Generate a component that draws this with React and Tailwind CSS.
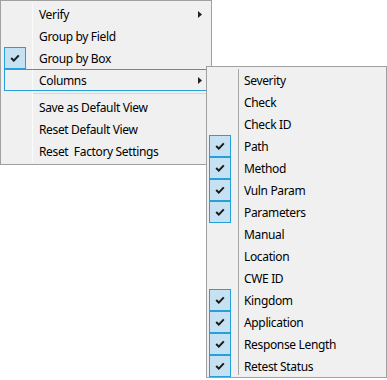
import React from "react";

function Check() {
  return (
    <svg width="10" height="8" viewBox="0 0 10 8" className="block">
      <path d="M1.2 4 L3.8 6.6 L8.8 1.4" fill="none" stroke="#1a1a1a" strokeWidth="2" />
    </svg>
  );
}

function Arrow() {
  return (
    <svg width="4" height="7" viewBox="0 0 4 7" className="block">
      <path d="M0 0 L4 3.5 L0 7 Z" fill="#222" />
    </svg>
  );
}

function Row({ label, checked, arrow, active }) {
  return (
    <div
      className={
        "relative flex h-[22px] items-center " +
        (active ? "outline outline-1 -outline-offset-1 outline-[#26a0da]" : "")
      }
    >
      <div className="w-[22px] h-[22px] shrink-0">
        {checked && (
          <div className="w-[22px] h-[22px] border border-[#26a0da] bg-[#c6e2f2] flex items-center justify-center">
            <Check />
          </div>
        )}
      </div>
      <div className="pl-[13px] pt-[2px] flex-1 text-[#000] leading-[20px] tracking-[-0.35px] whitespace-pre">{label}</div>
      {arrow && (
        <div className="pr-[5px]">
          <Arrow />
        </div>
      )}
    </div>
  );
}

export default function App() {
  const sub = [
    ["Severity", false],
    ["Check", false],
    ["Check ID", false],
    ["Path", true],
    ["Method", true],
    ["Vuln Param", true],
    ["Parameters", true],
    ["Manual", false],
    ["Location", false],
    ["CWE ID", false],
    ["Kingdom", true],
    ["Application", true],
    ["Response Length", true],
    ["Retest Status", true],
  ];
  return (
    <div className="relative w-[387px] h-[380px] bg-white font-['Noto_Sans',sans-serif] text-[12px] overflow-hidden">
      <div className="relative w-[212px] h-[165px] border border-[#a0a0a0] bg-[#f0f0f0] pt-[2px] pl-[3px] pr-[4px]">
        <div className="absolute left-[31px] top-[2px] bottom-[2px] w-px bg-[#fbfbfb]" />
        <Row label="Verify" arrow />
        <Row label="Group by Field" />
        <Row label="Group by Box" checked />
        <Row label="Columns" arrow active />
        <div className="h-[5px] flex items-center pl-[29px]">
          <div className="h-px w-full bg-[#d7d7d7]" />
        </div>
        <Row label="Save as Default View" />
        <Row label="Reset Default View" />
        <Row label="Reset  Factory Settings" />
      </div>
      <div className="absolute left-[206px] top-[66px] w-[181px] h-[312px] border border-[#a0a0a0] bg-[#f0f0f0] pt-[2px] pl-[2px] pr-[2px]">
        <div className="absolute left-[31px] top-[2px] bottom-[2px] w-px bg-[#a8a8a8]" />
        {sub.map(([l, c]) => (
          <Row key={l} label={l} checked={c} />
        ))}
      </div>
    </div>
  );
}
